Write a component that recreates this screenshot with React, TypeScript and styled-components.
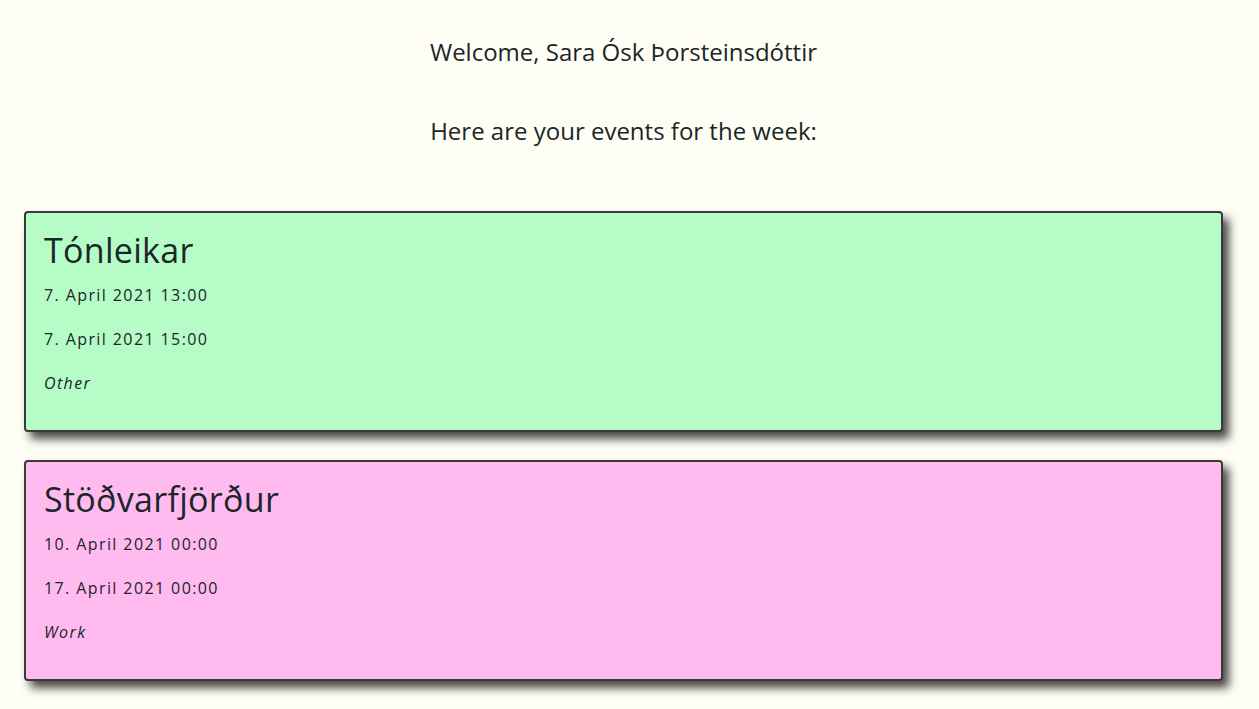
import React from "react";
import styled, { createGlobalStyle } from "styled-components";

const Global = createGlobalStyle`
  html, body { margin: 0; padding: 0; }
  body {
    background: #fffef5;
    color: #1a2629;
    font-family: "Open Sans", "Noto Sans", sans-serif;
  }
`;

const Page = styled.main`
  padding: 37px 36px 24px 24px;
  display: flex;
  flex-direction: column;
`;

const Heading = styled.h2`
  margin: 0;
  font-size: 24px;
  font-weight: 400;
  line-height: 30px;
  text-align: center;
`;

const Sub = styled(Heading)`
  margin-top: 49px;
`;

const List = styled.section`
  margin-top: 65px;
  display: flex;
  flex-direction: column;
  gap: 28px;
`;

const Card = styled.article<{ $bg: string }>`
  background: ${(p) => p.$bg};
  border: 2px solid #3a3a3a;
  border-radius: 4px;
  box-shadow: 6px 7px 10px rgba(0, 0, 0, 0.72);
  padding: 16px 18px 20px 18px;
  height: 221px;
  box-sizing: border-box;
`;

const Title = styled.h3`
  margin: 0;
  font-size: 34px;
  font-weight: 400;
  line-height: 42px;
  letter-spacing: 0.3px;
`;

const Line = styled.p<{ $italic?: boolean }>`
  margin: 0;
  font-size: 16px;
  line-height: 20px;
  letter-spacing: 1.4px;
  font-style: ${(p) => (p.$italic ? "italic" : "normal")};
  & + & { margin-top: 24px; }
  &:first-of-type { margin-top: 14px; }
`;

const events = [
  { title: "Tónleikar", start: "7. April 2021 13:00", end: "7. April 2021 15:00", cat: "Other", bg: "#b6fcc6" },
  { title: "Stöðvarfjörður", start: "10. April 2021 00:00", end: "17. April 2021 00:00", cat: "Work", bg: "#ffbbf0" },
];

export default function App() {
  return (
    <>
      <Global />
      <Page>
        <Heading>Welcome, Sara Ósk Þorsteinsdóttir</Heading>
        <Sub>Here are your events for the week:</Sub>
        <List>
          {events.map((e) => (
            <Card key={e.title} $bg={e.bg}>
              <Title>{e.title}</Title>
              <Line>{e.start}</Line>
              <Line>{e.end}</Line>
              <Line $italic>{e.cat}</Line>
            </Card>
          ))}
        </List>
      </Page>
    </>
  );
}
